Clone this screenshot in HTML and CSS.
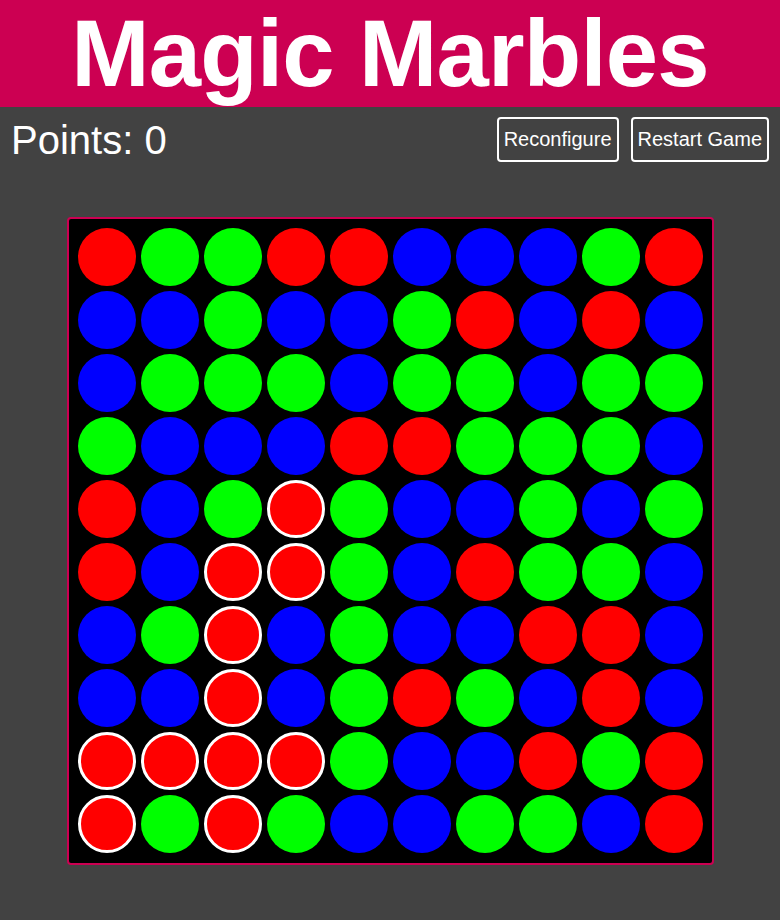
FILE: index.html
```html
<!DOCTYPE html>
<html>
<head>
<meta charset="utf-8">
<title>Magic Marbles</title>
<link rel="stylesheet" href="styles.css">
</head>
<body>
<header class="header"><h1 class="title">Magic Marbles</h1></header>
<div class="toolbar">
  <div class="points">Points: 0</div>
  <div class="actions">
    <button class="btn">Reconfigure</button>
    <button class="btn">Restart Game</button>
  </div>
</div>
<div class="board">
  <div class="m r"></div><div class="m g"></div><div class="m g"></div><div class="m r"></div><div class="m r"></div><div class="m b"></div><div class="m b"></div><div class="m b"></div><div class="m g"></div><div class="m r"></div>
  <div class="m b"></div><div class="m b"></div><div class="m g"></div><div class="m b"></div><div class="m b"></div><div class="m g"></div><div class="m r"></div><div class="m b"></div><div class="m r"></div><div class="m b"></div>
  <div class="m b"></div><div class="m g"></div><div class="m g"></div><div class="m g"></div><div class="m b"></div><div class="m g"></div><div class="m g"></div><div class="m b"></div><div class="m g"></div><div class="m g"></div>
  <div class="m g"></div><div class="m b"></div><div class="m b"></div><div class="m b"></div><div class="m r"></div><div class="m r"></div><div class="m g"></div><div class="m g"></div><div class="m g"></div><div class="m b"></div>
  <div class="m r"></div><div class="m b"></div><div class="m g"></div><div class="m r sel"></div><div class="m g"></div><div class="m b"></div><div class="m b"></div><div class="m g"></div><div class="m b"></div><div class="m g"></div>
  <div class="m r"></div><div class="m b"></div><div class="m r sel"></div><div class="m r sel"></div><div class="m g"></div><div class="m b"></div><div class="m r"></div><div class="m g"></div><div class="m g"></div><div class="m b"></div>
  <div class="m b"></div><div class="m g"></div><div class="m r sel"></div><div class="m b"></div><div class="m g"></div><div class="m b"></div><div class="m b"></div><div class="m r"></div><div class="m r"></div><div class="m b"></div>
  <div class="m b"></div><div class="m b"></div><div class="m r sel"></div><div class="m b"></div><div class="m g"></div><div class="m r"></div><div class="m g"></div><div class="m b"></div><div class="m r"></div><div class="m b"></div>
  <div class="m r sel"></div><div class="m r sel"></div><div class="m r sel"></div><div class="m r sel"></div><div class="m g"></div><div class="m b"></div><div class="m b"></div><div class="m r"></div><div class="m g"></div><div class="m r"></div>
  <div class="m r sel"></div><div class="m g"></div><div class="m r sel"></div><div class="m g"></div><div class="m b"></div><div class="m b"></div><div class="m g"></div><div class="m g"></div><div class="m b"></div><div class="m r"></div>
</div>
</body>
</html>
```
FILE: styles.css
```css
html, body {
  margin: 0;
  padding: 0;
  background: #424242;
  font-family: "Liberation Sans", Arial, sans-serif;
  color: #fff;
}
.header {
  background: #cc0052;
  text-align: center;
  height: 107px;
  overflow: hidden;
}
.title {
  margin: 0;
  font-size: 94px;
  font-weight: bold;
  letter-spacing: -0.8px;
  line-height: 108px;
  color: #fff;
}
.toolbar {
  display: flex;
  justify-content: space-between;
  align-items: flex-start;
  padding: 10px 11px 0 11px;
}
.points {
  font-size: 40px;
  line-height: 46px;
}
.actions {
  display: flex;
  gap: 12px;
}
.btn {
  height: 45px;
  padding: 0 5px;
  border: 2px solid #fff;
  border-radius: 4px;
  background: #424242;
  color: #fff;
  font-family: "Liberation Sans", Arial, sans-serif;
  font-size: 20px;
}
.board {
  width: 625px;
  margin: 54px auto 0;
  display: grid;
  grid-template-columns: repeat(10, 58px);
  grid-auto-rows: 58px;
  gap: 5px;
  padding: 9px 9px 10px 9px;
  background: #000;
  border: 2px solid #cc0052;
  border-radius: 4px;
}
.m {
  width: 58px;
  height: 58px;
  border-radius: 50%;
  box-sizing: border-box;
}
.r { background: #ff0000; }
.g { background: #00ff00; }
.b { background: #0000ff; }
.sel { border: 3px solid #fff; }
```
